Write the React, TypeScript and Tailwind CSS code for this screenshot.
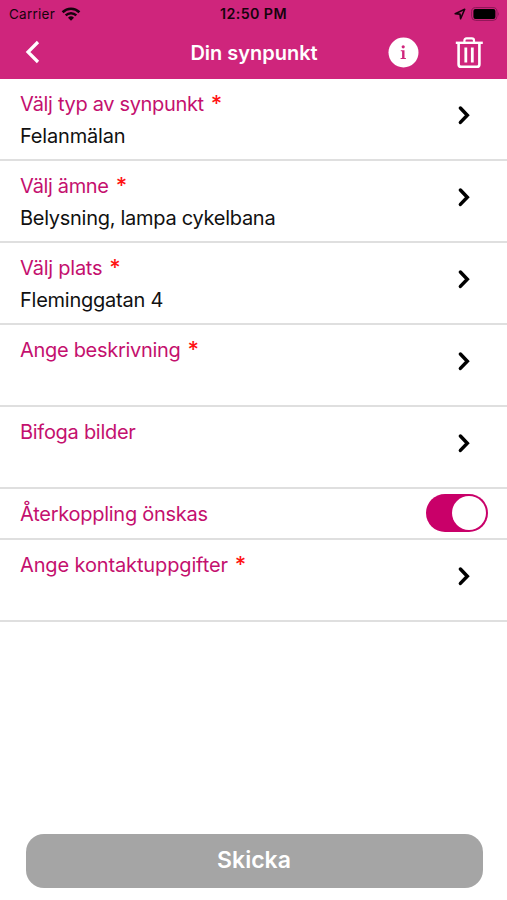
import React from "react";

type RowProps = {
  label: string;
  value?: string;
  required?: boolean;
  labelClass: string;
  valueClass?: string;
};

function Chevron() {
  return (
    <svg width="14" height="20" viewBox="0 0 14 20" fill="none" className="mt-[26px] shrink-0">
      <path d="M3.4 3 10.3 10.2 3.4 17.4" stroke="#000" strokeWidth="3.5" strokeLinecap="round" />
    </svg>
  );
}

function Row({ label, value, required, labelClass, valueClass }: RowProps) {
  return (
    <button className="flex h-[82px] w-full items-start justify-between border-b-2 border-[#dfdfdf] pl-5 pr-[36px] text-left">
      <span className="flex flex-col pt-[9px]">
        <span className="flex h-8 items-center whitespace-nowrap text-[20px] leading-8 text-[#c4106e]">
          <span className={labelClass}>{label}</span>
          {required && <span className="ml-[7px] pb-[3px] text-[22px] font-medium text-[#ff1414]">*</span>}
        </span>
        {value && <span className={`whitespace-nowrap text-[20px] leading-8 text-[#111] ${valueClass}`}>{value}</span>}
      </span>
      <Chevron />
    </button>
  );
}

function StatusBar() {
  return (
    <div className="grid h-[27px] grid-cols-3 items-center text-[#16030d]">
      <div className="flex items-center gap-[6px] pl-[9px]">
        <span className="pt-px text-[13.5px] tracking-[0.25px]">Carrier</span>
        <svg width="20" height="14" viewBox="0 0 20 14" fill="none" stroke="#16030d">
          <path d="M1.6 5.2a12 12 0 0 1 16.8 0" strokeWidth="2.6" />
          <path d="M4.7 8.4a7.5 7.5 0 0 1 10.6 0" strokeWidth="2.4" />
          <path d="M7 10.7a4.3 4.3 0 0 1 6 0l-3 3z" fill="#16030d" stroke="none" />
        </svg>
      </div>
      <span className="text-center text-[14.25px] font-semibold tracking-[0.4px]">12:50 PM</span>
      <div className="flex items-center justify-end gap-[5px] pr-[7px]">
        <svg width="12" height="12" viewBox="0 0 12 12" fill="none">
          <path d="M1.2 5.7 10.7 1.3 6.6 10.7 6 6.1z" stroke="#16030d" strokeWidth="1.6" strokeLinejoin="round" />
        </svg>
        <svg width="29" height="14" viewBox="0 0 29 14">
          <rect x="0.6" y="0.6" width="25.4" height="12.8" rx="4" fill="none" stroke="#8b1656" strokeWidth="1" />
          <rect x="2.4" y="2" width="22" height="10" rx="2" fill="#000" />
          <path d="M27.2 4.8q1.6 2.2 0 4.4z" fill="#8b1656" />
        </svg>
      </div>
    </div>
  );
}

export default function App() {
  return (
    <div className="flex h-[900px] w-[507px] flex-col overflow-hidden bg-white font-['Inter','Liberation_Sans',sans-serif]">
      <header className="h-[79px] shrink-0 bg-[#cf257c]">
        <StatusBar />
        <div className="grid h-[50px] grid-cols-[127px_1fr_127px] items-center text-white">
          <button aria-label="Tillbaka" className="pl-[24px]">
            <svg width="18" height="26" viewBox="0 0 18 26" fill="none">
              <path d="M14 3 4 13l10 10" stroke="#fff" strokeWidth="3.2" />
            </svg>
          </button>
          <h1 className="pt-px pl-px text-center text-[20px] font-semibold tracking-[-0.02px]">Din synpunkt</h1>
          <div className="flex items-center gap-[36px] pl-[8px]">
            <svg width="31" height="31" viewBox="0 0 31 31">
              <circle cx="15.5" cy="15.5" r="15" fill="#fff" />
              <circle cx="15.2" cy="9.8" r="1.6" fill="#cf257c" />
              <path d="M12.8 13.2h3.7v7.8h1.4v1.1h-5.3v-1.1h1.5v-6.7h-1.3z" fill="#cf257c" />
            </svg>
            <svg width="29" height="33" viewBox="0 0 29 33" fill="none" stroke="#fff">
              <path d="M0.8 6.8h27" strokeWidth="2.4" />
              <path d="M9.4 6.4V4.6q0-2.2 2.2-2.2h5.2q2.2 0 2.2 2.2v1.8" strokeWidth="2.2" />
              <path d="M3.6 6.8v21.4q0 2.6 2.6 2.6h15.6q2.6 0 2.6-2.6V6.8" strokeWidth="2.6" />
              <path d="M10.8 11.4v15M17.3 11.4v15" strokeWidth="2.8" />
            </svg>
          </div>
        </div>
      </header>

      <main className="flex-1">
        <Row label="Välj typ av synpunkt" value="Felanmälan" required labelClass="tracking-[-0.33px]" valueClass="tracking-[-0.18px]" />
        <Row label="Välj ämne" value="Belysning, lampa cykelbana" required labelClass="tracking-[-0.35px]" valueClass="tracking-[-0.28px]" />
        <Row label="Välj plats" value="Fleminggatan 4" required labelClass="tracking-[-0.25px]" valueClass="tracking-[-0.24px]" />
        <Row label="Ange beskrivning" required labelClass="tracking-[-0.3px]" />
        <Row label="Bifoga bilder" labelClass="tracking-[-0.28px]" />
        <div className="flex h-[51px] items-center justify-between border-b-2 border-[#dfdfdf] pl-5 pr-[19px]">
          <span className="text-[20px] tracking-[-0.26px] text-[#c4106e]">Återkoppling önskas</span>
          <button role="switch" aria-checked="true" aria-label="Återkoppling önskas" className="mb-px flex h-[38.5px] w-[62px] items-center justify-end rounded-full bg-[#c90069] pr-[2px]">
            <span className="size-[34px] rounded-full bg-white" />
          </button>
        </div>
        <Row label="Ange kontaktuppgifter" required labelClass="tracking-[-0.13px]" />
      </main>

      <footer className="h-[66.5px] shrink-0 pl-[25.5px] pr-[24.5px]">
        <button className="h-[54px] w-full rounded-[18px] bg-[#a5a5a5] text-[23px] font-semibold text-white">Skicka</button>
      </footer>
    </div>
  );
}
